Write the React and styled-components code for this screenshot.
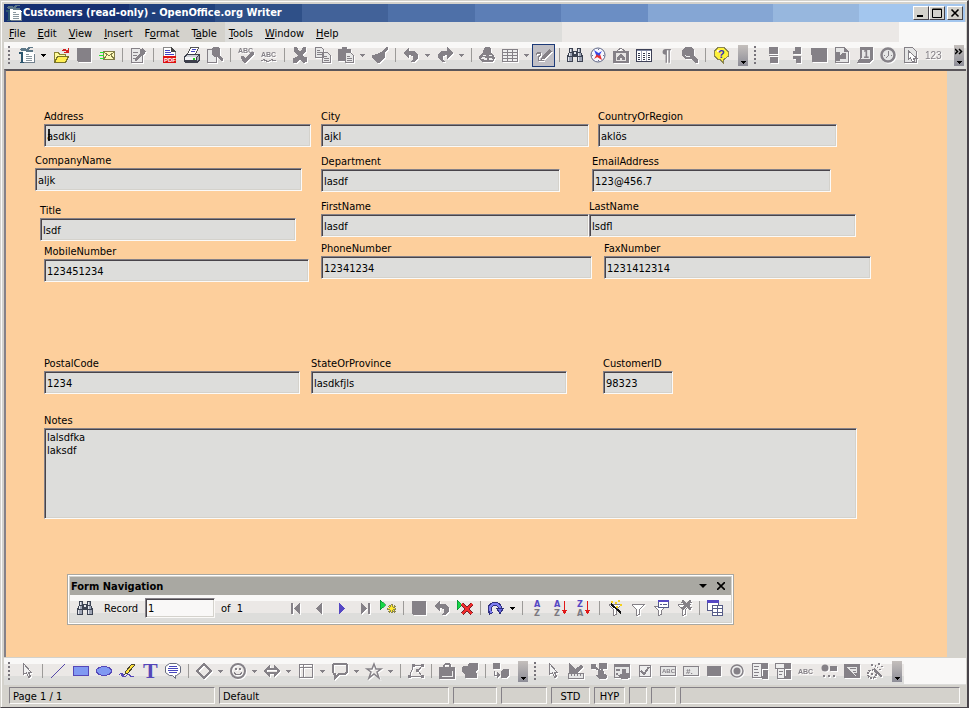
import React from 'react';
import styled, { createGlobalStyle, css } from 'styled-components';

const GlobalStyle = createGlobalStyle`
  * { box-sizing: border-box; }
  body { margin: 0; }
  body, button, input, textarea {
    font-family: 'DejaVu Sans Condensed', 'DejaVu Sans', sans-serif;
    font-size: 11px;
    color: #000;
  }
  button { border: 0; padding: 0; background: none; }
`;

const G = '#858187';
const bands = 'linear-gradient(#f9f8f7 0 6px, #ebe8e6 6px 18px, #dddddb 18px)';

const Window = styled.div`
  min-height: 100vh;
  display: flex;
  flex-direction: column;
  background: #d4d2cc;
  padding: 3px 1px 1px 3px;
  border: 1px solid #d4d2cc;
  border-right: 2px solid #48444a;
  border-bottom-color: #48444a;
  box-shadow: inset 1px 1px 0 #fbfaf8;
`;

const TitleBar = styled.header`
  display: flex;
  align-items: center;
  height: 18px;
  margin-right: 1px;
  padding: 0 2px;
  background: linear-gradient(90deg, #163072 0 13%, #20407c 13% 22%, #2f5088 22% 31%,
    #426299 31% 40%, #4e70a8 40% 49%, #5c7eb6 49% 58%, #6b8ec4 58% 67%,
    #85a6d4 67% 80%, #97b7de 80% 89%, #a3c6ee 89%);
`;

const Title = styled.h1`
  flex: 1;
  margin: 0;
  padding-left: 1px;
  font-size: 11px;
  line-height: 18px;
  color: #fff;
`;

const CaptionButton = styled.button`
  width: 16px;
  height: 14px;
  display: grid;
  place-items: center;
  background: #d4d2cc;
  border: 1px solid;
  border-color: #fff #48444a #48444a #fff;
  & + &:last-child { margin-left: 2px; }
`;

const MenuBar = styled.nav`
  display: flex;
  gap: 12px;
  height: 20px;
  padding: 0 5px;
  line-height: 24px;
  background: linear-gradient(90deg, #d4d2cc 0 23%, #dddddb 23% 58%, #ebe8e6 58% 93%, #f9f8f7 93%);
`;

const MenuLink = styled.a`
  color: #000;
  text-decoration: none;
`;

const Bar = styled.div`
  display: flex;
  align-items: center;
  height: 27px;
  padding-bottom: 1px;
  background: ${bands};
`;

const Grip = styled.span`
  flex: none;
  width: 11px;
  height: 18px;
  border-left: 4px solid transparent;
  background: repeating-linear-gradient(#77737a 0 2px, transparent 2px 4px) 0 0 / 2px 100% no-repeat;
`;

const Sep = styled.span`
  flex: none;
  width: 8px;
  height: 14px;
  background: linear-gradient(#9c9a98, #9c9a98) 4px 0 / 1px 100% no-repeat;
`;

const ToolButton = styled.button`
  flex: none;
  width: 23px;
  height: 23px;
  display: grid;
  place-items: center;
  ${p => p.$on && css`
    background: #c0bfc5;
    border: 1px solid #1c3a78;
  `}
`;

const Arrow = styled.button`
  flex: none;
  width: 11px;
  height: 23px;
  display: grid;
  place-items: center;
`;

const More = styled.button`
  flex: none;
  width: 10px;
  height: 21px;
  margin-left: ${p => p.$end ? 'auto' : '6px'};
  margin-right: 2px;
  display: grid;
  align-items: end;
  justify-items: center;
  background: linear-gradient(#c4bfbc, #8d8d97);
`;

// everything right of the last toolbar stays blank
const BarRest = styled.span`
  flex: 1;
  align-self: stretch;
  background: #f9f8f7;
`;

const Svg = styled.svg`
  display: block;
  overflow: visible;
  shape-rendering: crispEdges;
  filter: ${p => p.$gray ? 'drop-shadow(1px 1px 0 #fff)' : 'none'};
`;

const Workspace = styled.main`
  position: relative;
  flex: 1;
  display: flex;
  border: 1px solid #858187;
  border-width: 2px 0 0 2px;
  border-color: #5a565a #858187;
  margin-bottom: 1px;
`;

const Page = styled.form`
  flex: 1;
  padding: 39px 20px 130px 29px;
  background: #fdcf9c;
`;

const Gutter = styled.div`
  width: 19px;
  background: #d4d2cc;
`;

const Columns = styled.div`
  display: grid;
  grid-template-columns: 286px 1fr;
`;

const Row = styled.div`
  display: flex;
  padding-left: ${p => p.$indent || 0}px;
  margin-top: ${p => p.$gap || 0}px;
`;

const FieldBox = styled.div`
  flex: none;
  width: ${p => p.$w}px;
  margin-left: ${p => p.$lead || 0}px;
`;

const Label = styled.label`
  display: block;
  line-height: 14px;
  height: 14px;
  white-space: nowrap;
`;

const sunken = css`
  display: block;
  width: 100%;
  border: 1px solid;
  border-color: #858187 #fbfaf8 #fbfaf8 #858187;
  box-shadow: inset 1px 1px 0 #48444a, inset -1px -1px 0 #d4d2cc;
  background: #dddddb;
  border-radius: 0;
  outline: 0;
`;

const TextBox = styled.input`
  ${sunken}
  height: 23px;
  padding: 1px 2px 0;
  ${p => p.$caret && css`
    background: linear-gradient(#222, #222) 3px 4px / 2px 12px no-repeat #dddddb;
  `}
`;

const Memo = styled.textarea`
  ${sunken}
  height: 91px;
  padding: 2px;
  line-height: 13px;
  resize: none;
`;

const Palette = styled.section`
  position: absolute;
  left: 61px;
  bottom: 32px;
  width: 667px;
  border: 1px solid #a9a8a2;
  box-shadow: inset 0 0 0 1px #fff;
  padding: 2px;
  background: #d4d2cc;
`;

const PaletteTitle = styled.div`
  display: flex;
  align-items: center;
  gap: 10px;
  height: 18px;
  padding: 0 6px 0 1px;
  background: #a9a8a2;
`;

const PaletteName = styled.h2`
  flex: 1;
  margin: 0;
  font-size: 11px;
`;

const PaletteBar = styled(Bar)`
  padding-left: 3px;
`;

const RecordInput = styled.input`
  ${sunken}
  flex: none;
  width: 70px;
  height: 20px;
  margin: 0 6px;
  padding: 0 2px;
  background: #f9f8f7;
`;

const RecordText = styled.label`
  margin-left: ${p => p.$first ? 8 : 0}px;
  width: ${p => p.$w}px;
  white-space: pre;
`;

const StatusBar = styled.footer`
  display: grid;
  grid-template-columns: 206px 230px 44px 46px 39px 31px 18px 25px 1fr;
  gap: 4px;
  padding: 2px 6px 2px 5px;
`;

const Cell = styled.div`
  height: 17px;
  padding: 0 3px;
  line-height: 17px;
  text-align: ${p => p.$center ? 'center' : 'left'};
  border: 1px solid;
  border-color: #858187 #fbfaf8 #fbfaf8 #858187;
`;

const abc = (y, x = 0, t = 'ABC', size = 7) => (
  <text x={x} y={y} fontSize={size} fontFamily="Liberation Sans" fontWeight="bold" fill={G}>{t}</text>
);

const binoculars = <>
  <path d="M2 1h4v3h4v-3h4v4l2 4v6h-6v-5h-4v5h-6v-6l2-4z" fill="#3d4352" />
  <path d="M3 2h2v3h-2zM11 2h2v3h-2zM2 6h3v3h-3zM11 6h3v3h-3zM1 10h4v4h-4zM11 10h4v4h-4z" fill="#9fa5b5" />
  <path d="M3 2h1v3h-1zM11 2h1v3h-1zM2 6h1v3h-1zM11 6h1v3h-1zM1 10h1v4h-1zM11 10h1v4h-1zM7 5h2v2h-2z" fill="#e6e8ee" />
</>;

const funnel = <path d="M2.500 4.500h12l-5 5v5l-3 1v-6l-4-4z" fill="#fff" stroke={G} />;

// 16x16 drawings, the ones in "gray" also get a white relief
const color = {
  writer: <>
    <path d="M4 4h9l3 3v9h-12z" fill="#fff" />
    <path d="M2 1h4l1 1 2-2h5v1h-3l-2 2h5v2h-6l-2-1h-4v-1h-2z" fill="#5d7787" />
    <path d="M0 5h4v10h2v1h-5v-1h1v-8h-2z" fill="#2c566e" />
    <path d="M15.500 7v8.500h-11" stroke="#71808c" fill="none" />
    <path d="M7 7.500h3M7 9.500h6M7 11.500h6M7 13.500h6" stroke="#8a979f" fill="none" />
  </>,
  open: <>
    <path d="M1.500 5.500h4l1 2h6v8h-11z" fill="#fffb9c" stroke="#8b8432" />
    <path d="M1.500 15.500l3-6h11l-3 6z" fill="#ffef52" stroke="#77732b" />
    <path d="M9 3h1v-1h3v1h2v-2h1v5h-5v-1h2v-1h-4z" fill="#d22222" />
  </>,
  mail: <>
    <path d="M4.500 4.500h11v8h-11z" fill="#fffbb8" stroke="#827d48" />
    <path d="M5 5l5 4 5-4M5 12l3-4M15 12l-3-4" fill="none" stroke="#827d48" />
    <path d="M1 5h4v1h-4zM0 8h5v1h-5zM1 11h4v1h-4z" fill="#2be82b" />
  </>,
  pdf: <>
    <path d="M2.500.5h8l4 4v11h-12z" fill="#fff" stroke="#888" />
    <path d="M10 0v5h5z" fill="#444" />
    <path d="M4 3.500h5M4 5.500h6M4 7.500h9" stroke="#4242c6" />
    <path d="M2 9h13v7h-13z" fill="#dd1111" />
    <text x="3" y="15" fontSize="6" fontWeight="bold" fontFamily="Liberation Sans" fill="#fff">PDF</text>
  </>,
  print: <>
    <path d="M6.500.5h8l-3 7h-8z" fill="#fff" stroke="#555" />
    <path d="M8 2.500h4M7 4.500h4" stroke="#4646c0" />
    <path d="M0 9l3-2h12l1 1v5l-3 3h-12l-1-2z" fill="#3c3f4b" />
    <path d="M3 8h11l-2 2h-11z" fill="#cfd1d8" />
    <path d="M1 10h11v3h-11z" fill="#f4f4f6" />
    <path d="M13 10l2-1v3l-2 2z" fill="#a5a8b2" />
    <path d="M9 11h2v2h-2z" fill="#1ad21a" />
  </>,
  binoculars,
  compass: <>
    <circle cx="8" cy="8" r="7" fill="#f6f7ff" stroke="#5f6685" shapeRendering="auto" />
    <path d="M8 2h1v1h-1zM8 13h1v1h-1zM2 8h1v1h-1zM13 8h1v1h-1z" fill="#6b718c" />
    <path d="M4 3l6 4-3 3z" fill="#3547e6" shapeRendering="auto" />
    <path d="M12 13l-5-3 3-3z" fill="#e62f2f" shapeRendering="auto" />
    <path d="M4 12l3-5 2 2z" fill="#e62f2f" shapeRendering="auto" />
    <path d="M12 4l-3 5-2-2z" fill="#3547e6" shapeRendering="auto" />
  </>,
  sources: <>
    <path d="M.5 2.500h15v12h-15z" fill="#fff" stroke="#3d4056" />
    <path d="M1 3h14v1h-14z" fill="#7f86a2" />
    <path d="M5.500 4v10M10.500 4v10" stroke="#a4a8ba" />
    <path d="M2 6.500h2M2 8.500h2M2 10.500h2M2 12.500h2M7 6.500h2M7 8.500h2M7 10.500h2M7 12.500h2M12 6.500h2M12 8.500h2M12 10.500h2M12 12.500h2" stroke="#33374a" />
  </>,
  help: <>
    <path d="M5 .5h6l4 4v5l-4 3h-1v3l-3-3h-2l-4-4v-4z" fill="#fff23c" stroke="#8b8650" />
    <path d="M4 3h3v2h-3z" fill="#fffde0" />
    <text x="5" y="11" fontSize="11" fontWeight="bold" fontFamily="Liberation Sans" fill="#3434bd">?</text>
  </>,
  line: <path d="M1 15l14-14" stroke="#5547a8" />,
  rect: <path d="M.5 3.500h15v9h-15z" fill="#8099f2" stroke="#5547b8" />,
  ellipse: <ellipse cx="8" cy="8" rx="7.500" ry="4.500" fill="#8099f2" stroke="#5547b8" />,
  pencil: <>
    <path d="M7 8l6-7h2v2l-6 7-3 1z" fill="#ffe33c" stroke="#4b4530" />
    <path d="M0 11h1v-1h3v1h1v2h2v-1h1v-1h3v1h1v1h3v1h-4v-1h-1v-1h-2v1h-1v1h-4v-1h-1v-2h-1v1h-1z" fill="#5547b8" />
  </>,
  text: <text x="1" y="15" fontSize="22" fontWeight="bold" fontFamily="Liberation Serif" fill="#5547b8">T</text>,
  bubble: <>
    <path d="M4.500.5h7l4 3v6l-4 3h-1v3l-3-3h-3l-4-3v-6z" fill="#fff" stroke="#666b7d" shapeRendering="auto" />
    <path d="M4 3.500h8M3 5.500h10M3 7.500h10M4 9.500h8" stroke="#4747bd" />
  </>,
  next: <path d="M5 3v11l6-5.500z" fill="#5547c4" />,
  newRec: <>
    <path d="M0 0v10l6-5z" fill="#18d848" stroke="#087d30" strokeWidth=".6" />
    <path d="M11 4h2v2l2-1 1 2h-1v1h1v2h-1l1 2-2 1-1-1v1h-2v-1l-2 1-1-2 1-1h-2v-2h2l-1-2 2-1 1 1z" fill="#8b8650" />
    <path d="M11 5h1v7h-1zM8 8h7v1h-7zM9 6h1v1h-1zM13 6h1v1h-1zM9 10h1v1h-1zM13 10h1v1h-1zM10 7h3v3h-3z" fill="#ffe92e" />
  </>,
  delRec: <>
    <path d="M0 0v10l5-5z" fill="#18d848" stroke="#087d30" strokeWidth=".6" />
    <path d="M5 4l10 10M15 4l-10 10" stroke="#751f28" strokeWidth="3.500" />
    <path d="M5 4l10 10M15 4l-10 10" stroke="#f02c2c" strokeWidth="2" />
  </>,
  refresh: <>
    <path d="M3 14q-4-10 4-10q5 0 5 5" fill="none" stroke="#30307f" strokeWidth="4" />
    <path d="M3 13q-3-9 4-9q5 0 5 5" fill="none" stroke="#7d7df0" strokeWidth="2" />
    <path d="M8.500 8.500h7l-3.500 5z" fill="#6b6be2" stroke="#30307f" />
  </>,
  sort: <>
    <text x="4" y="7" fontSize="9" fontWeight="bold" fill="#5547c4">A</text>
    <text x="4" y="16" fontSize="9" fontWeight="bold" fill="#7c7980">Z</text>
  </>,
  sortAsc: <>
    <text x="1" y="7" fontSize="9" fontWeight="bold" fill="#5547c4">A</text>
    <text x="1" y="16" fontSize="9" fontWeight="bold" fill="#7c7980">Z</text>
    <path d="M11 1h1v9h2l-2 4h-1l-2-4h2z" fill="#e01818" />
  </>,
  sortDesc: <>
    <text x="1" y="7" fontSize="9" fontWeight="bold" fill="#5547c4">Z</text>
    <text x="1" y="16" fontSize="9" fontWeight="bold" fill="#7c7980">A</text>
    <path d="M11 1h1v9h2l-2 4h-1l-2-4h2z" fill="#e01818" />
  </>,
  autoFilter: <>
    {funnel}
    <path d="M4 4l10 9" stroke="#111" strokeWidth="2" />
    <path d="M4 1h2v2h-2zM8 2h2v2h-2zM11 0h2v2h-2zM13 4h2v2h-2zM9 6h2v2h-2z" fill="#f5d21d" />
  </>,
  formFilter: <>
    <path d="M1.500 6.500h11l-4 4v4l-3 1v-5z" fill="#fff" stroke={G} />
    <path d="M5.500.5h10v7h-10z" fill="#fff" stroke="#565c88" />
    <path d="M5 0h11v2h-11z" fill="#5547c4" /><path d="M7 4.500h2M10 4.500h4" stroke="#565c88" />
  </>,
  table: <>
    <path d="M.5.5h11v10h-11z" fill="#fff" stroke="#565c88" />
    <path d="M0 0h12v3h-12z" fill="#5547c4" />
    <path d="M5.500 5.500h10v10h-10zM5 8.500h11M5 12.500h11M10.500 5v11" fill="#fff" stroke="#565c88" />
  </>,
};

const gray = {
  save: <path d="M1 1h14v14h-13l-1-1z" fill={G} />,
  edit: <>
    <path d="M1.500 1.500h8l3 3v11h-11z" fill="#e8e8e8" stroke={G} />
    <path d="M3 5.500h5M3 8.500h4M3 11.500h3" stroke={G} /><path d="M5 14l1-4 4-4v-3l2-2 4 3-1 3-3 1-4 5z" fill={G} />
  </>,
  preview: <>
    <path d="M.5 2.500h9v13h-9z" fill="#e8e8e8" stroke={G} />
    <path d="M5 1l2-1h4l2 2v5l-1 1 4 4v2h-2l-4-4h-3l-2-2z" fill={G} />
  </>,
  spell: <>{abc(6)}<path d="M3 9h3l1 2 6-6h3v2l-8 9h-2l-3-5z" fill={G} /></>,
  autospell: <>{abc(10)}<path d="M0 13h2v-1h2v1h2v1h2v-1h2v-1h2v1h3v1h-4v-1h-1v1h-2v1h-3v-1h-2v-1h-1v1h-2z" fill={G} /></>,
  cut: <path d="M2 0h3l2 4h2l2-4h3v4l-4 4 2 2h3v5l-4 1-3-4-3 4h-4v-5l4-1 1-2-4-3z" fill={G} />,
  copy: <>
    <path d="M.5.500h6l2 2v8h-8zM7.500 5.500h5l3 3v7h-8z" fill="#e8e8e8" stroke={G} />
    <path d="M2 3.500h3M2 5.500h5M2 7.500h5M9 9.500h3M9 11.500h5M9 13.500h5" stroke={G} />
  </>,
  paste: <>
    <path d="M0 2h4v-2h5v2h4v12h-13z" fill={G} />
    <path d="M7.500 5.500h5l3 3v7h-8z" fill="#e8e8e8" stroke={G} /><path d="M9 9.500h3M9 11.500h5M9 13.500h5" stroke={G} />
  </>,
  brush: <path d="M14 0h2v2l-3 4v4l-3 4-3 2h-2l-5-6v-2l5-1 4-2h1z" fill={G} />,
  undo: <path d="M0 6l6-6v4h5l4 3v4l-4 4h-3l2-3v-3l-4-1v4z" fill={G} />,
  redo: <path d="M16 6l-6-6v4h-5l-4 3v4l4 4h3l-2-3v-3l4-1v4z" fill={G} />,
  link: <>
    <path d="M5 1l2-1h3l2 2v4l3 2 1 3-2 4h-11l-3-3v-3l4-3z" fill={G} />
    <path d="M2 11h1v-1h3v1h2v1h2v-1h3v1h1v1h-4v-1h-2v1h-3v-1h-3zM4 8h3v1h-3zM10 8h3v1h-3z" fill="#eee" />
  </>,
  grid: <path d="M.5 2.500h15v12h-15zM1 5.500h15M1 8.500h15M1 11.500h15M5.500 2v12M10.500 2v12" fill="#eee" stroke={G} />,
  draw: <>
    <path d="M13 2l3 2-6 7-5 2 1-4z" fill={G} />
    <path d="M0 6h1v-1h4v3l-2 2v3h5v1h-6v-4l2-3h-3v1h-1z" fill={G} />
  </>,
  gallery: <>
    <path d="M4 4l4-3 4 3" fill="none" stroke={G} />
    <path d="M0 4h16v12h-16z" fill={G} /><path d="M3 6h10v8h-10z" fill="#e6e4e3" />
    <path d="M4 10l4-3 4 3v3h-3v-2h-2v2h-3z" fill={G} />
  </>,
  pilcrow: <text x="3" y="14" fontSize="17" fontWeight="bold" fontFamily="Liberation Sans" fill={G}>¶</text>,
  zoom: <>
    <path d="M3 0h6l3 3v5l4 5v3h-2l-5-4h-6l-3-3v-6z" fill={G} />
    <path d="M3 8h1v1h4v1h-4v-1h-1z" fill="#eee" />
  </>,
  splitA: <path d="M4 0h9v7h-9zM5 10h8v6h-8zM4 8h9v1h-9z" fill={G} />,
  splitB: <path d="M7 0h6v7h-8v-3h2zM5 9h8v7h-5v-4h-3z" fill={G} />,
  image: <path d="M0 1h16v14h-15z" fill={G} />,
  pageImage: <>
    <path d="M1.500.5h9l4 4v11h-13z" fill="#e6e6e6" stroke={G} />
    <path d="M10 0v5h5z" fill={G} /><path d="M2 5h4v3l3-2h3v6h-6v2h-4z" fill={G} />
  </>,
  date: <>
    <path d="M3 0h13v12l-4 4h-12l3-5z" fill={G} /><path d="M5 3h8v9h-9l1-2z" fill="#e6e6e6" />
    <text x="6" y="11" fontSize="10" fontWeight="bold" fill={G}>1</text>
  </>,
  time: <>
    <circle cx="8" cy="8" r="6.500" fill="#e6e6e6" stroke={G} strokeWidth="2.500" shapeRendering="auto" />
    <path d="M8 4h1v5h-1v1h-1v1h-1v-1h1v-1h1zM4 8h1v1h-1zM11 8h1v1h-1z" fill={G} />
  </>,
  pagePointer: <>
    <path d="M1.500.5h8l4 4v11h-12z" fill="#e6e6e6" stroke={G} />
    <path d="M5.500 4v8l2-1 2 4 2-1-1-3h3z" fill="#fff" stroke={G} />
  </>,
  digits: <text x="-1" y="12" fontSize="10" fontFamily="Liberation Sans" fill={G}>123</text>,
  pointer: <path d="M4.500.5v11l3-2 2 5 2-1-2-4h3z" fill="#f2f2f2" stroke={G} />,
  diamond: <path d="M8 1l7 7-7 7-7-7z" fill="none" stroke={G} strokeWidth="2" />,
  smiley: <>
    <circle cx="8" cy="8" r="7" fill="none" stroke={G} strokeWidth="2" shapeRendering="auto" />
    <path d="M5 5h2v2h-2zM9 5h2v2h-2zM4 9h1v1h1v1h4v-1h1v-1h1v2h-1v1h-6v-1h-1z" fill={G} />
  </>,
  arrows: <path d="M1 8l4-4v2h6v-2l4 4-4 4v-2h-6v2z" fill="none" stroke={G} strokeWidth="2" />,
  flow: <path d="M1.500 1.500h13v13h-13zM1.500 4.500h13M5.500 1.500v13" fill="none" stroke={G} />,
  callout: <path d="M2 1h12l1 1v7l-2 2h-6l-4 4v-4h-1l-1-2v-7z" fill="none" stroke={G} strokeWidth="2" />,
  star: <path d="M8 1l2 5h5l-4 3 2 6-5-4-5 4 2-6-4-3h5z" fill="none" stroke={G} strokeWidth="1.500" shapeRendering="auto" />,
  points: <>
    <path d="M14.500 2.500h-9l-4 11h13M14 3l-4 5 4 5" fill="none" stroke={G} />
    <path d="M4 1h3v3h-3zM13 1h3v3h-3zM0 12h3v3h-3zM13 12h3v3h-3zM8 6h3v3h-3z" fill={G} />
  </>,
  fromFile: <>
    <path d="M0 4h4v-2l2-2h4l2 2v2h4v12h-16zM6 4h4v-2h-4z" fillRule="evenodd" fill={G} />
    <path d="M3 13.500h10.500v-6" stroke="#eee" fill="none" />
  </>,
  extrude: <path d="M0 4l2-1h4v-2l2-1h8v7l-2 1 1 3v4h-12v-4l-3-2z" fill={G} />,
  cube: <>
    <path d="M0 0h7v6h-7zM8 9l2-3h6v6l-2 3h-6z" fill={G} />
    <path d="M1 8h1v4h2v-3l3 3-3 4v-3h-3z" fill={G} />
  </>,
  design: <>
    <path d="M1 0l6 6 6-4 3 2-8 7h-7z" fill={G} />
    <path d="M.5 10.500h15v5h-15zM3.500 11v2M6.500 11v2M9.500 11v2M12.500 11v2" fill="#e6e6e6" stroke={G} />
  </>,
  control: <>
    <path d="M0 1h5v5h-5zM8 0h8v6h-8z" fill={G} />
    <path d="M4 4l6 5M12 5l-2 4" stroke={G} strokeWidth="2" />
    <path d="M7 8h6v3l3 1v3l-2 1h-6l-3-3v-1h2z" fill={G} />
  </>,
  formProps: <>
    <path d="M.5 1.500h15v13h-15z" fill="#e6e6e6" stroke={G} /><path d="M0 1h16v3h-16zM8 6h4v4h3v5l-2 1h-6l-3-4 4-1z" fill={G} />
    <path d="M2 6h4v2h-4zM2 10h2v2h-2z" fill={G} />
  </>,
  check: <>
    <path d="M2.500 2.500h11v11h-11z" fill="#eee" stroke={G} />
    <path d="M4 8l3 3 5-7" fill="none" stroke={G} strokeWidth="2" />
  </>,
  textField: <><path d="M.5 3.500h15v9h-15z" fill="#e6e6e6" stroke={G} />{abc(10, 2, 'ABC', 6)}</>,
  numField: <><path d="M.5 3.500h15v9h-15z" fill="#e6e6e6" stroke={G} />{abc(11, 3, '#.', 8)}</>,
  push: <path d="M1 3h14v10h-14z" fill={G} />,
  radio: <g shapeRendering="auto"><circle cx="8" cy="8" r="6" fill="#eee" stroke={G} strokeWidth="1.500" /><circle cx="8" cy="8" r="3.500" fill={G} /></g>,
  list: <>
    <path d="M.5.500h9v14h-9z" fill="#eee" stroke={G} /><path d="M10 0h6v6h-6zM11 7h5v9h-6v-3h1zM2 3h5v1h-5zM2 6h4v1h-4zM2 9h5v1h-5zM2 12h4v1h-4z" fill={G} />
  </>,
  combo: <>
    <path d="M.5.500h9v5h-9zM2.500 5.500h7v10h-7z" fill="#eee" stroke={G} /><path d="M10 0h6v6h-6zM11 7h5v9h-6v-3h1zM4 8h4v1h-4zM4 11h3v1h-3z" fill={G} />
  </>,
  labelAbc: abc(11),
  moreCtl: <><circle cx="4" cy="5" r="3.500" fill={G} shapeRendering="auto" /><path d="M9 3h7v5h-7zM2 12h2v2h-2zM7 12h2v2h-2zM12 12h2v2h-2z" fill={G} /></>,
  formDesign: <><path d="M0 1h16v14h-16z" fill={G} /><path d="M3 4h10v6h-3l2 3-9-8z" fill="#e6e6e6" /><path d="M6 5.500h6M9 8.500h3" stroke={G} /></>,
  wizard: <>
    <circle cx="5" cy="11" r="4" fill="none" stroke={G} strokeWidth="2" strokeDasharray="2 1" /><circle cx="5" cy="11" r="1.500" fill={G} />
    <path d="M7 6l8 8" stroke={G} strokeWidth="2" />
    <path d="M4 1h2v2h-2zM8 2h1v2h-1zM11 0h2v2h-2zM14 3h2v1h-2zM12 6h2v1h-2zM10 4h1v1h-1z" fill={G} />
  </>,
  first: <path d="M3 3h2v11h-2zM12 3v11l-6-5.500z" fill={G} />,
  prev: <path d="M11 3v11l-6-5.500z" fill={G} />,
  last: <path d="M11 3h2v11h-2zM4 3v11l6-5.500z" fill={G} />,
  filter: funnel,
  noFilter: <>{funnel}<path d="M6 1l9 8M15 1l-9 8" stroke={G} strokeWidth="3" /></>,
};

function Icon({ name }) {
  const isGray = name in gray;
  return (
    <Svg $gray={isGray} width="16" height="16" viewBox="0 0 16 16" aria-hidden="true">
      {isGray ? gray[name] : color[name]}
    </Svg>
  );
}

const Triangle = ({ fill = '#000' }) => (
  <svg width="7" height="7" viewBox="0 0 7 7" shapeRendering="crispEdges">
    <path d="M1 2h5v1h-1v1h-1v1h-1v-1h-1v-1h-1z" fill={fill} />
  </svg>
);

// "|" is a separator, "v" an enabled drop-down arrow, "-" a disabled one
function Tools({ items, on }) {
  return items.split(' ').map((item, i) => {
    if (item === '|') return <Sep key={i} />;
    if (item === 'v' || item === '-') {
      return <Arrow type="button" aria-label="More" key={i}><Triangle fill={item === 'v' ? '#000' : G} /></Arrow>;
    }
    return (
      <ToolButton type="button" key={i} aria-label={item} $on={item === on}>
        <Icon name={item} />
      </ToolButton>
    );
  });
}

const Overflow = ({ end, double }) => (
  <More type="button" aria-label="Toolbar options" $end={end}>
    {double && (
      <svg width="8" height="7" viewBox="0 0 8 7"><path d="M0 1l2.500 2.500-2.500 2.500M4 1l2.500 2.500-2.500 2.500" fill="none" stroke="#000" strokeWidth="1.500" /></svg>
    )}
    <Triangle />
  </More>
);

function Field({ name, value, w, lead, caret }) {
  return (
    <FieldBox $w={w} $lead={lead}>
      <Label htmlFor={name}>{name}</Label>
      <TextBox id={name} defaultValue={value} readOnly $caret={caret} />
    </FieldBox>
  );
}

const menus = ['_File', '_Edit', '_View', '_Insert', 'F_ormat', 'T_able', '_Tools', '_Window', '_Help'];

const leftFields = [
  { name: 'Address', value: 'asdklj', w: 267, indent: 9, gap: 0, caret: true },
  { name: 'CompanyName', value: 'aljk', w: 267, indent: 0, gap: 7 },
  { name: 'Title', value: 'lsdf', w: 256, indent: 5, gap: 13 },
  { name: 'MobileNumber', value: '123451234', w: 265, indent: 9, gap: 4 },
];

const rightRows = [
  { gap: 0, fields: [{ name: 'City', value: 'ajkl', w: 268 }, { name: 'CountryOrRegion', value: 'aklös', w: 239, lead: 9 }] },
  { gap: 8, fields: [{ name: 'Department', value: 'lasdf', w: 239 }, { name: 'EmailAddress', value: '123@456.7', w: 239, lead: 32 }] },
  { gap: 8, fields: [{ name: 'FirstName', value: 'lasdf', w: 268 }, { name: 'LastName', value: 'lsdfl', w: 267 }] },
  { gap: 5, fields: [{ name: 'PhoneNumber', value: '12341234', w: 271 }, { name: 'FaxNumber', value: '1231412314', w: 267, lead: 12 }] },
];

export default function App() {
  return (
    <Window>
      <GlobalStyle />
      <TitleBar>
        <Icon name="writer" />
        <Title>Customers (read-only) - OpenOffice.org Writer</Title>
        <CaptionButton aria-label="Minimize">
          <svg width="10" height="10"><path d="M1 7h6v2h-6z" /></svg>
        </CaptionButton>
        <CaptionButton aria-label="Maximize">
          <svg width="10" height="10"><path d="M.5 1h9v8.500h-9zM0 1.500h10" fill="none" stroke="#000" /></svg>
        </CaptionButton>
        <CaptionButton aria-label="Close">
          <svg width="10" height="10"><path d="M1.500 1.500l7 7M8.500 1.500l-7 7" stroke="#000" strokeWidth="1.600" /></svg>
        </CaptionButton>
      </TitleBar>

      <MenuBar>
        {menus.map(m => {
          const [before, rest] = m.split('_');
          return <MenuLink href="#" key={m}>{before}<u>{rest[0]}</u>{rest.slice(1)}</MenuLink>;
        })}
      </MenuBar>

      <Bar>
        <Grip />
        <Tools
          on="draw"
          items="writer v open save mail | edit | pdf print preview | spell autospell | cut copy paste - brush | undo - redo - | link grid - draw | binoculars compass gallery sources pilcrow zoom | help"
        />
        <Overflow />
        <Grip />
        <Tools items="splitA splitB image pageImage date time pagePointer digits" />
        <Overflow end double />
      </Bar>

      <Workspace>
        <Page>
          <Columns>
            <div>
              {leftFields.map(f => (
                <Row key={f.name} $indent={f.indent} $gap={f.gap}><Field {...f} /></Row>
              ))}
            </div>
            <div>
              {rightRows.map((r, i) => (
                <Row key={i} $gap={r.gap}>{r.fields.map(f => <Field key={f.name} {...f} />)}</Row>
              ))}
            </div>
          </Columns>
          <Row $indent={9} $gap={75}>
            <Field name="PostalCode" value="1234" w={256} />
            <Field name="StateOrProvince" value="lasdkfjls" w={256} lead={11} />
            <Field name="CustomerID" value="98323" w={70} lead={36} />
          </Row>
          <Row $indent={9} $gap={20}>
            <FieldBox $w={813}>
              <Label htmlFor="Notes">Notes</Label>
              <Memo id="Notes" readOnly defaultValue={'lalsdfka\nlaksdf'} />
            </FieldBox>
          </Row>
        </Page>
        <Gutter />

        <Palette>
          <PaletteTitle>
            <PaletteName>Form Navigation</PaletteName>
            <button type="button" aria-label="Menu">
              <svg width="8" height="8"><path d="M0 2h8l-4 4z" /></svg>
            </button>
            <button type="button" aria-label="Close">
              <svg width="8" height="8"><path d="M0 0l8 8M8 0l-8 8" stroke="#000" strokeWidth="1.600" /></svg>
            </button>
          </PaletteTitle>
          <PaletteBar>
            <Tools items="binoculars" />
            <RecordText $first $w={35} htmlFor="record">Record</RecordText>
            <RecordInput id="record" defaultValue="1" />
            <RecordText as="span" $w={63}>of  1</RecordText>
            <Tools items="first prev next last newRec | save undo delRec | refresh v | sort sortAsc sortDesc | autoFilter filter formFilter noFilter | table" />
          </PaletteBar>
        </Palette>
      </Workspace>

      <Bar>
        <Grip />
        <Tools items="pointer | line rect ellipse pencil text bubble | diamond - smiley - arrows - flow - callout - star - | points | fromFile extrude | cube" />
        <Overflow />
        <Grip />
        <Tools items="pointer design control formProps check textField numField push radio list combo labelAbc moreCtl formDesign wizard" />
        <Overflow />
        <BarRest />
      </Bar>

      <StatusBar>
        <Cell>Page 1 / 1</Cell>
        <Cell>Default</Cell>
        <Cell />
        <Cell />
        <Cell $center>STD</Cell>
        <Cell $center>HYP</Cell>
        <Cell />
        <Cell />
        <Cell />
      </StatusBar>
    </Window>
  );
}
